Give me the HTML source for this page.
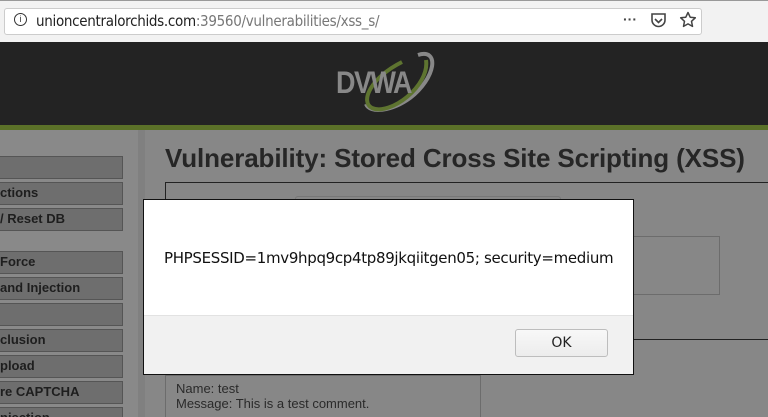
<!DOCTYPE html>
<html style="overflow:hidden;height:417px"><head><style>
*{margin:0;padding:0;box-sizing:border-box}
body{width:768px;height:417px;overflow:hidden;position:relative;background:#878787;font-family:"DejaVu Sans","Liberation Sans",sans-serif}
.a{position:absolute}
.url{left:0;top:0;width:768px;height:42px;background:#f2f2f2;border-top:1px solid #999}
.bar{left:4px;top:8px;width:698px;height:27px;background:#fff;border:1px solid #ccc;border-radius:3px}
.btn{left:0;width:123px;height:23px;background:#6e6e6e;border:1px solid #555;border-left:none;font:bold 13px "Liberation Sans",sans-serif;color:#1e1e1e;line-height:20px}
</style></head><body>
<div class="a url"></div>
<div class="a bar"></div>
<div class="a" style="left:14px;top:13px;width:13px;height:13px;border:1px solid #333;border-radius:50%;font:9px 'Liberation Sans';text-align:center;line-height:11px;color:#333">i</div>
<div class="a" style="left:36px;top:12px;font:15px 'DejaVu Sans Condensed','DejaVu Sans',sans-serif;color:#222;letter-spacing:-0.3px">unioncentralorchids.com<span style="color:#777">:39560/vulnerabilities/xss_s/</span></div>
<div class="a" style="left:623px;top:11px;font:bold 14px sans-serif;color:#444">···</div>
<svg class="a" style="left:650px;top:12px" width="18" height="17"><path d="M2 2h13v6a6.5 6.5 0 0 1-13 0z" fill="none" stroke="#444" stroke-width="1.6"/><path d="M5 7l3.5 3.5L12 7" fill="none" stroke="#444" stroke-width="1.6"/></svg>
<svg class="a" style="left:679px;top:11px" width="18" height="18"><path d="M9 1.5l2.2 4.7 5.1.6-3.8 3.5 1 5.1L9 12.9l-4.5 2.5 1-5.1L1.7 6.8l5.1-.6z" fill="none" stroke="#444" stroke-width="1.5" stroke-linejoin="round"/></svg>
<div class="a" style="left:0;top:42px;width:768px;height:83px;background:#232323"></div>
<svg class="a" style="left:330px;top:48px" width="115" height="68"><path d="M88 7 C110 0 106 30 80 50 C62 63 40 66 36 56" fill="none" stroke="#888" stroke-width="4"/><path d="M96 12 C100 38 60 68 42 60 C30 54 40 30 72 14" fill="none" stroke="#5e7430" stroke-width="4"/><text x="6" y="45" font-family="Liberation Sans" font-weight="bold" font-size="27" fill="#888" letter-spacing="-1.5" transform="scale(1,1.15) translate(0,-6)">DVWA</text></svg>
<div class="a" style="left:0;top:125px;width:768px;height:5px;background:#5b7128"></div>
<div class="a" style="left:0;top:130px;width:138px;height:287px;background:#898989"></div>
<div class="a" style="left:138px;top:130px;width:7px;height:287px;background:#808080"></div>
<div class="a btn" style="top:156px"></div>
<div class="a btn" style="top:182px">ctions</div>
<div class="a btn" style="top:208px">/ Reset DB</div>
<div class="a btn" style="top:251px">Force</div>
<div class="a btn" style="top:277px">and Injection</div>
<div class="a btn" style="top:303px"></div>
<div class="a btn" style="top:329px">clusion</div>
<div class="a btn" style="top:355px">pload</div>
<div class="a btn" style="top:381px">re CAPTCHA</div>
<div class="a btn" style="top:407px">njection</div>
<div class="a" style="left:165px;top:143px;font:bold 26px 'Liberation Sans',sans-serif;color:#262626;white-space:nowrap;letter-spacing:-0.12px">Vulnerability: Stored Cross Site Scripting (XSS)</div>
<div class="a" style="left:165px;top:182px;width:610px;height:158px;border:1px solid #222"></div>
<div class="a" style="left:295px;top:196px;width:266px;height:10px;border:1px solid #777;border-bottom:none;border-radius:3px 3px 0 0"></div>
<div class="a" style="left:620px;top:236px;width:100px;height:59px;border:1px solid #6c6c6c"></div>
<div class="a" style="left:165px;top:375px;width:316px;height:50px;border:1px solid #6c6c6c;font:13px 'Liberation Sans',sans-serif;color:#2a2a2a;padding:5px 10px;line-height:15px">Name: test<br>Message: This is a test comment.</div>
<div class="a" style="left:143px;top:199px;width:491px;height:176px;background:#fff;border:1px solid #111"></div>
<div class="a" style="left:144px;top:315px;width:489px;height:59px;background:#f1f1f1;border-top:1px solid #e2e2e2"></div>
<div class="a" style="left:164px;top:249px;font:15px 'DejaVu Sans',sans-serif;color:#111;letter-spacing:-0.32px;white-space:nowrap">PHPSESSID=1mv9hpq9cp4tp89jkqiitgen05; security=medium</div>
<div class="a" style="left:515px;top:329px;width:93px;height:28px;background:linear-gradient(#f8f8f8,#ececec);border:1px solid #bdbdbd;border-radius:3px;font:14px 'DejaVu Sans',sans-serif;text-align:center;line-height:26px;color:#222">OK</div>
</body></html>
